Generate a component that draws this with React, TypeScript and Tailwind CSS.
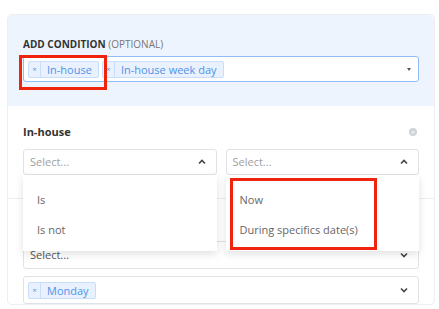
const font = { fontFamily: '"Open Sans", "Liberation Sans", sans-serif' }

function Tag({ label }: { label: string }) {
  return (
    <span className="flex h-[17px] items-center rounded-[2px] border border-[#c9defa] bg-[#e8f1fd] text-[#4f93ea]">
      <span className="flex h-full w-[12px] items-center justify-center border-r border-[#c9defa] text-[8px] leading-none">×</span>
      <span className="px-[6px] text-[11px] leading-none">{label}</span>
    </span>
  )
}

function ChevronUp() {
  return (
    <svg width="8" height="6" viewBox="0 0 8 6" className="text-[#444]">
      <path d="M1 4.5 L4 1.5 L7 4.5" fill="none" stroke="currentColor" strokeWidth="1.6" />
    </svg>
  )
}

function ChevronDown() {
  return (
    <svg width="8" height="6" viewBox="0 0 8 6" className="text-[#444]">
      <path d="M1 1.5 L4 4.5 L7 1.5" fill="none" stroke="currentColor" strokeWidth="1.6" />
    </svg>
  )
}

function Menu({ items }: { items: string[] }) {
  return (
    <div className="absolute left-0 top-full z-10 w-full bg-white pb-[6px] pt-[10px] shadow-[0_3px_8px_rgba(0,0,0,0.12)]">
      {items.map((item) => (
        <div key={item} className="flex h-[30px] items-center px-[14px] text-[11px] text-[#666]">
          {item}
        </div>
      ))}
    </div>
  )
}

function OpenSelect({ items }: { items: string[] }) {
  return (
    <div className="relative flex-1">
      <div className="flex h-[26px] items-center justify-between rounded-[3px] border border-[#dfe2e6] bg-white pl-[6px] pr-[10px]">
        <span className="text-[11px] text-[#a0a0a0]">Select...</span>
        <ChevronUp />
      </div>
      <Menu items={items} />
    </div>
  )
}

export default function App() {
  return (
    <div className="relative h-[309px] w-[439px] overflow-hidden bg-white pl-[7px] pr-[4px] pt-[14px]" style={font}>
      <div className="rounded-[5px] border border-[#eceef2]">
        <div className="rounded-t-[5px] bg-[#edf4fd] px-[15px] pb-[24px] pt-[23px]">
          <div className="text-[10px] leading-[12px] text-[#333]">
            <span className="font-bold">ADD CONDITION</span>{' '}
            <span className="text-[#777]">(OPTIONAL)</span>
          </div>
          <div className="mt-[6px] flex h-[26px] items-center gap-[3px] rounded-[3px] border border-[#90bdf3] bg-white pl-[4px] pr-[7px]">
            <Tag label="In-house" />
            <Tag label="In-house week day" />
            <span className="ml-auto h-0 w-0 border-x-[2.5px] border-t-[3px] border-x-transparent border-t-[#555]" />
          </div>
        </div>

        <div className="px-[15px] pb-[23px] pt-[19px]">
          <div className="flex items-center justify-between">
            <span className="text-[11px] font-bold leading-[14px] text-[#333]">In-house</span>
            <span className="mr-[2px] flex h-[8px] w-[8px] items-center justify-center rounded-full bg-[#cdd3da] text-[7px] leading-none text-white">×</span>
          </div>
          <div className="mt-[10px] flex gap-[9px]">
            <OpenSelect items={['Is', 'Is not']} />
            <OpenSelect items={['Now', 'During specifics date(s)']} />
          </div>
        </div>

        <div className="border-t border-[#eceef2] px-[15px] pt-[42px]">
          <div className="flex h-[28px] items-center justify-between rounded-[3px] border border-[#dfe2e6] pl-[6px] pr-[10px]">
            <span className="text-[11px] text-[#555]">Select...</span>
            <ChevronDown />
          </div>
          <div className="mt-[7px] flex h-[28px] items-center justify-between rounded-[3px] border border-[#dfe2e6] pl-[4px] pr-[10px]">
            <Tag label="Monday" />
            <ChevronDown />
          </div>
        </div>
      </div>

      <div className="absolute left-[19px] top-[55px] z-20 h-[35px] w-[88px] border-[3px] border-[#f0230f]" />
      <div className="absolute left-[230px] top-[178px] z-20 h-[72px] w-[147px] border-[3px] border-[#f0230f]" />
    </div>
  )
}
